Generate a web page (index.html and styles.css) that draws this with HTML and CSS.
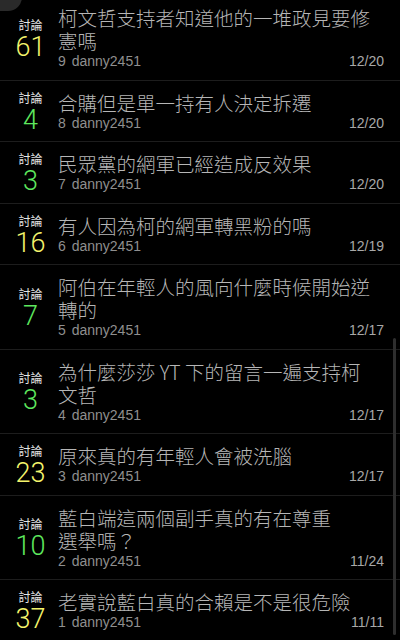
FILE: index.html
```html
<!DOCTYPE html>
<html lang="zh-Hant">
<head>
    <meta charset="UTF-8">
    <meta name="viewport" content="width=device-width, initial-scale=1.0">
    <title>討論串列表</title>
    <link rel="stylesheet" href="styles.css">
</head>
<body>

    <!-- Top corner of the floating back button -->
    <div class="corner"></div>

    <ul class="threads">
        <li class="thread">
            <div class="count"><span class="count-label">討論</span><span class="count-num hot">61</span></div>
            <div class="thread-body">
                <p class="title">柯文哲支持者知道他的一堆政見要修憲嗎</p>
                <div class="meta"><span class="author"><span class="floor">9</span> danny2451</span><span class="date">12/20</span></div>
            </div>
        </li>
        <li class="thread">
            <div class="count"><span class="count-label">討論</span><span class="count-num">4</span></div>
            <div class="thread-body">
                <p class="title">合購但是單一持有人決定拆遷</p>
                <div class="meta"><span class="author"><span class="floor">8</span> danny2451</span><span class="date">12/20</span></div>
            </div>
        </li>
        <li class="thread">
            <div class="count"><span class="count-label">討論</span><span class="count-num">3</span></div>
            <div class="thread-body">
                <p class="title">民眾黨的網軍已經造成反效果</p>
                <div class="meta"><span class="author"><span class="floor">7</span> danny2451</span><span class="date">12/20</span></div>
            </div>
        </li>
        <li class="thread">
            <div class="count"><span class="count-label">討論</span><span class="count-num hot">16</span></div>
            <div class="thread-body">
                <p class="title">有人因為柯的網軍轉黑粉的嗎</p>
                <div class="meta"><span class="author"><span class="floor">6</span> danny2451</span><span class="date">12/19</span></div>
            </div>
        </li>
        <li class="thread">
            <div class="count"><span class="count-label">討論</span><span class="count-num">7</span></div>
            <div class="thread-body">
                <p class="title">阿伯在年輕人的風向什麼時候開始逆轉的</p>
                <div class="meta"><span class="author"><span class="floor">5</span> danny2451</span><span class="date">12/17</span></div>
            </div>
        </li>
        <li class="thread">
            <div class="count"><span class="count-label">討論</span><span class="count-num">3</span></div>
            <div class="thread-body">
                <p class="title">為什麼莎莎 YT 下的留言一遍支持柯文哲</p>
                <div class="meta"><span class="author"><span class="floor">4</span> danny2451</span><span class="date">12/17</span></div>
            </div>
        </li>
        <li class="thread">
            <div class="count"><span class="count-label">討論</span><span class="count-num hot">23</span></div>
            <div class="thread-body">
                <p class="title">原來真的有年輕人會被洗腦</p>
                <div class="meta"><span class="author"><span class="floor">3</span> danny2451</span><span class="date">12/17</span></div>
            </div>
        </li>
        <li class="thread">
            <div class="count"><span class="count-label">討論</span><span class="count-num">10</span></div>
            <div class="thread-body">
                <p class="title">藍白端這兩個副手真的有在尊重<br>選舉嗎？</p>
                <div class="meta"><span class="author"><span class="floor">2</span> danny2451</span><span class="date">11/24</span></div>
            </div>
        </li>
        <li class="thread">
            <div class="count"><span class="count-label">討論</span><span class="count-num hot">37</span></div>
            <div class="thread-body">
                <p class="title">老實說藍白真的合賴是不是很危險</p>
                <div class="meta"><span class="author"><span class="floor">1</span> danny2451</span><span class="date">11/11</span></div>
            </div>
        </li>
    </ul>

    <!-- Scroll indicator -->
    <div class="scrollbar"></div>

</body>
</html>
```

FILE: styles.css
```css
/* Basic Reset */
* {
    margin: 0;
    padding: 0;
    box-sizing: border-box;
}

body {
    font-family: "Liberation Sans", "Noto Sans CJK TC", sans-serif;
    background: #000;
    color: #bbb;
    height: 640px;
    overflow: hidden;
    position: relative;
}

/* Floating button peeking in at the top left */
.corner {
    position: absolute;
    top: -30px;
    left: -40px;
    width: 62px;
    height: 41px;
    border-radius: 14px;
    background: #2a2a2a;
    z-index: 2;
}

/* Thread list */
.threads {
    list-style: none;
    margin-top: -4px;
}

.thread {
    display: flex;
    align-items: center;
    padding: 10px 16px 9.5px 3px;
    border-bottom: 1px solid #1d1d1d;
}

.count {
    width: 55px;
    flex-shrink: 0;
    display: flex;
    flex-direction: column;
    align-items: center;
}

.count-label {
    font-family: "Noto Sans CJK TC", sans-serif;
    font-size: 12px;
    line-height: 14px;
    color: #e4e4e4;
}

.count-num {
    font-family: Roboto, "Liberation Sans", sans-serif;
    font-weight: 300;
    font-size: 27px;
    line-height: 30px;
    margin-bottom: -3px;
    color: #5ee85e;
}

.count-num.hot {
    color: #f4f46c;
}

.thread-body {
    flex: 1;
    min-width: 0;
}

.title {
    font-family: "Noto Sans CJK TC", sans-serif;
    font-weight: 300;
    font-size: 19.5px;
    line-height: 23px;
    color: #b6b6b6;
    padding-right: 8px;
}

.meta {
    display: flex;
    justify-content: space-between;
    align-items: baseline;
    font-size: 14px;
    line-height: 18px;
}

.author {
    color: #8f8f8f;
}

.floor {
    margin-right: 2px;
}

.date {
    color: #a8a8a8;
}

/* Scroll indicator */
.scrollbar {
    position: absolute;
    right: 4px;
    top: 338px;
    width: 3px;
    height: 297px;
    border-radius: 2px;
    background: #2e2e2e;
}
```
